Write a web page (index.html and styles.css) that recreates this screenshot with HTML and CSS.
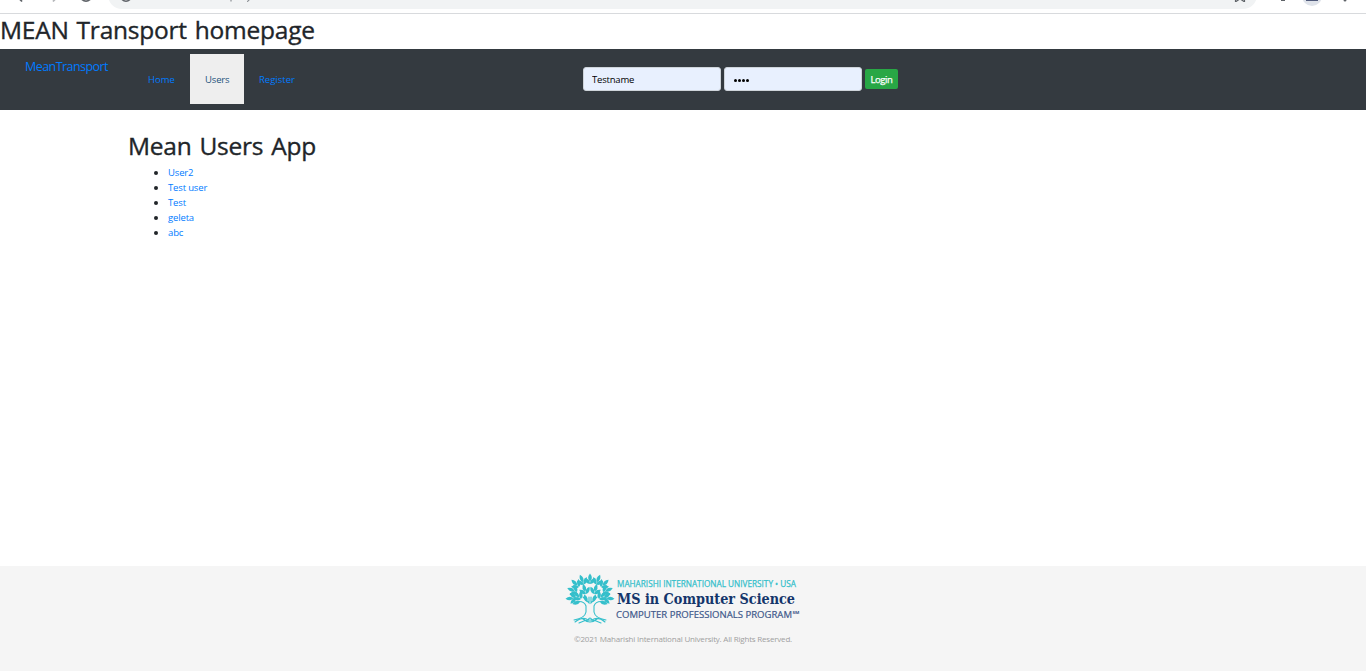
FILE: index.html
```html
<!DOCTYPE html>
<html lang="en">
<head>
<meta charset="utf-8">
<title>MEAN Transport</title>
<link rel="stylesheet" href="styles.css">
</head>
<body>
<div class="chrome">
  <svg width="1366" height="14" viewBox="0 0 1366 14" fill="none">
    <rect x="108" y="-19" width="1149" height="28" rx="14" fill="#f1f3f4"/>
    <path d="M16-5L22 1.5" stroke="#5f6368" stroke-width="1.8"/>
    <path d="M59-5L53 1.5" stroke="#b5b7ba" stroke-width="1.8"/>
    <circle cx="86" cy="-4" r="5.2" stroke="#5f6368" stroke-width="1.8"/>
    <circle cx="126" cy="-4" r="5.2" stroke="#5f6368" stroke-width="1.5"/>
    <path d="M231-4V1.5M249-4V.5L247 1.5" stroke="#777b80"/>
    <path d="M1235.500 2V0M1236 1.500L1239-.5M1241-.5L1244 1.500M1244.500 2V0" stroke="#5f6368" stroke-width="1.2"/>
    <path d="M1281 0h4" stroke="#5f6368" stroke-width="2"/>
    <circle cx="1312" cy="-4" r="10" fill="#dfe3ea"/>
    <path d="M1306 0h12" stroke="#505b7b" stroke-width="2"/>
    <circle cx="1345" cy="0" r="1.5" fill="#5f6368"/>
  </svg>
</div>
<h1 class="page-title">MEAN Transport homepage</h1>
<nav class="navbar">
  <a class="brand">MeanTransport</a>
  <div class="links">
    <a class="link home">Home</a>
    <a class="link active">Users</a>
    <a class="link register">Register</a>
  </div>
  <form class="login">
    <input class="field" type="text" value="Testname" aria-label="Username">
    <div class="field password"><i></i><i></i><i></i><i></i></div>
    <button class="button" type="button">Login</button>
  </form>
</nav>
<main class="content">
  <h1 class="heading">Mean Users App</h1>
  <ul class="users">
    <li><a>User2</a></li>
    <li><a>Test user</a></li>
    <li><a>Test</a></li>
    <li><a>geleta</a></li>
    <li><a>abc</a></li>
  </ul>
</main>
<footer class="footer">
  <svg class="logo" width="236" height="54" viewBox="565 572 236 54">
    <defs>
      <path id="leaf" d="M0 0Q-3.600-3.500 0-8Q3.600-3.500 0 0Z"/>
      <g id="sprig"><use href="#leaf" y="-2.500"/><use href="#leaf" transform="rotate(-42)"/><use href="#leaf" transform="rotate(42)"/></g>
    </defs>
    <g fill="#35bfcb">
      <use href="#sprig" transform="translate(576 598) rotate(-94)"/>
      <use href="#sprig" transform="translate(577 592) rotate(-68)"/>
      <use href="#sprig" transform="translate(579 587) rotate(-46)"/>
      <use href="#sprig" transform="translate(584 584.500) rotate(-23)"/>
      <use href="#sprig" transform="translate(590 584)"/>
      <use href="#sprig" transform="translate(596 584.500) rotate(23)"/>
      <use href="#sprig" transform="translate(601 587) rotate(46)"/>
      <use href="#sprig" transform="translate(603 592) rotate(68)"/>
      <use href="#sprig" transform="translate(604 598) rotate(94)"/>
      <use href="#sprig" transform="translate(581 599) rotate(-45)"/>
      <use href="#sprig" transform="translate(586 594) rotate(-16)"/>
      <use href="#sprig" transform="translate(594 594) rotate(16)"/>
      <use href="#sprig" transform="translate(599 599) rotate(45)"/>
      <use href="#leaf" transform="translate(580 602) rotate(-105)"/>
      <use href="#leaf" transform="translate(600 602) rotate(105)"/>
      <use href="#leaf" transform="translate(587 602) rotate(-20)"/>
      <use href="#leaf" transform="translate(593 602) rotate(20)"/>
    </g>
    <g fill="none" stroke="#35bfcb" stroke-width="1.1" stroke-linecap="round">
      <path d="M575 602Q584 600 586 606V612Q585 618 574 620M605 602Q596 600 594 606V612Q595 618 606 620"/>
      <path d="M583 597L589 603V597M597 597L591 603V597"/>
      <path d="M575 622Q583 616 588 620Q590 616 592 620Q598 616 605 622M579 623Q590 617 601 623M583 619Q590 625 597 619"/>
    </g>
    <text class="logo-top" x="617" y="586.5" textLength="179" lengthAdjust="spacingAndGlyphs">MAHARISHI INTERNATIONAL UNIVERSITY • USA</text>
    <text class="logo-main" x="617" y="603.5" textLength="178" lengthAdjust="spacingAndGlyphs">MS in Computer Science</text>
    <text class="logo-bottom" x="616" y="618" textLength="176" lengthAdjust="spacingAndGlyphs">COMPUTER PROFESSIONALS PROGRAM</text>
    <text class="logo-mark" x="792.5" y="614" textLength="7" lengthAdjust="spacingAndGlyphs">SM</text>
  </svg>
  <p class="copyright">©2021 Maharishi International University. All Rights Reserved.</p>
</footer>
</body>
</html>
```
FILE: styles.css
```css
* { box-sizing: border-box; }
body { margin: 0; height: 671px; display: flex; flex-direction: column; overflow: hidden; background: #fff; color: #212529; font: 10px/15px "Open Sans", "Noto Sans", sans-serif; }
.chrome { height: 14px; flex: none; border-bottom: 1px solid #d8dadd; overflow: hidden; }
.chrome svg { display: block; }
.page-title, .heading { margin: 0; font-size: 24.5px; line-height: 30px; font-weight: 500; letter-spacing: -.23px; word-spacing: 1.8px; -webkit-text-stroke: .35px #212529; }
.page-title { height: 35px; padding-top: 1px; flex: none; }
.navbar { height: 61px; flex: none; display: flex; background: #343a40; color: #007bff; }
.brand { width: 133px; padding: 10px 0 0 25px; font-size: 12.5px; letter-spacing: -.55px; }
.links { display: flex; padding-top: 5px; width: 450px; }
.link { height: 50px; padding: 18px 15px 0; line-height: 15px; font-size: 9.5px; }
.home { width: 57px; }
.active { width: 54px; background: #eee; color: #23527c; letter-spacing: -.15px; }
.login { display: flex; padding-top: 18px; gap: 3px; }
.field { width: 138px; height: 24px; padding: 0 8px; border: 1px solid #ced4da; border-radius: 3px; background: #e8f0fe; color: #000; font: 9.5px "Open Sans", "Noto Sans", sans-serif; letter-spacing: -.2px; outline: none; }
.password { display: flex; align-items: center; gap: 1px; padding-top: 2px; padding-left: 9px; }
.password i { width: 3px; height: 3px; border-radius: 50%; background: #000; }
.button { width: 33px; height: 20px; margin-top: 2px; padding: 0; border: 0; border-radius: 2px; background: #28a745; color: #fff; font: 500 9.5px "Open Sans", "Noto Sans", sans-serif; letter-spacing: -.4px; -webkit-text-stroke: .25px #fff; }
.content { flex: 1; padding: 21px 128px 0; }
.heading { height: 34px; }
.users { margin: 0; padding-left: 40px; }
.users a { color: #007bff; font-size: 9.5px; letter-spacing: -.15px; }
.footer { height: 105px; flex: none; display: flex; flex-direction: column; align-items: center; padding-top: 6px; background: #f5f5f5; }
.logo { display: block; overflow: visible; }
.logo text { font-family: "Open Sans", "Noto Sans", sans-serif; }
.logo .logo-top { font-size: 8.5px; fill: #35bfcb; stroke: #35bfcb; stroke-width: .25px; }
.logo .logo-main { font-family: "Roboto Slab", "DejaVu Serif", serif; font-size: 14.5px; font-weight: 700; fill: #14356b; }
.logo .logo-bottom { font-size: 9.5px; fill: #40588a; stroke: #40588a; stroke-width: .2px; }
.logo .logo-mark { font-size: 4px; font-weight: 700; fill: #40588a; }
.copyright { margin: 5px 0 0; font-size: 8px; line-height: 15px; letter-spacing: -.2px; color: #a0a0a0; }
```
